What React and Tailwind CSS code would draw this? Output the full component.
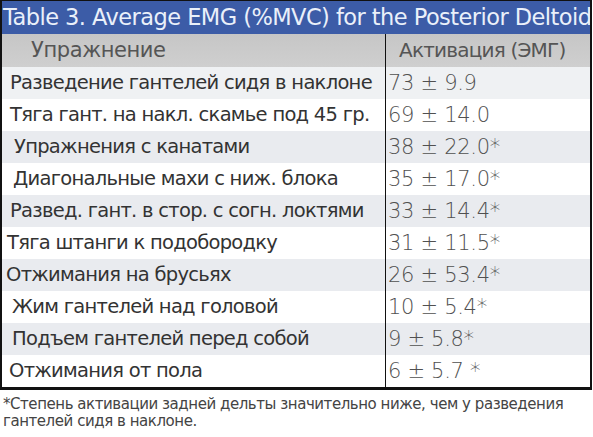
const rows = [
  ["Разведение гантелей сидя в наклоне", "73 ± 9.9", "pl-[8px]", "bg-[#eff1f3]"],
  ["Тяга гант. на накл. скамье под 45 гр.", "69 ± 14.0", "pl-[8px]", "bg-white"],
  ["Упражнения с канатами", "38 ± 22.0*", "pl-[12px]", "bg-[#e9ebef]"],
  ["Диагональные махи с ниж. блока", "35 ± 17.0*", "pl-[11px]", "bg-white"],
  ["Развед. гант. в стор. с согн. локтями", "33 ± 14.4*", "pl-[8px]", "bg-[#e9ebef]"],
  ["Тяга штанги к подобородку", "31 ± 11.5*", "pl-[5px]", "bg-white"],
  ["Отжимания на брусьях", "26 ± 53.4*", "pl-[4px]", "bg-[#e9ebef]"],
  ["Жим гантелей над головой", "10 ± 5.4*", "pl-[10px]", "bg-white"],
  ["Подъем гантелей перед собой", "9 ± 5.8*", "pl-[10px]", "bg-[#e9ebef]"],
  ["Отжимания от пола", "6 ± 5.7 *", "pl-[7px]", "bg-white"],
];

export default function App() {
  return (
    <div className="w-[593px] h-[437px] bg-white overflow-hidden" style={{ fontFamily: '"DejaVu Sans", Verdana, sans-serif' }}>
      <div className="w-[592px] border-t border-l-2 border-r-2 border-b-[3px] border-[#111]">
        <div className="h-[33px] bg-[#3c5ca7] text-[#eaf0fa] text-[22.5px] tracking-[-0.55px] leading-[33px] pl-[1px] whitespace-nowrap overflow-hidden">
          Table 3. Average EMG (%MVC) for the Posterior Deltoid
        </div>
        <div className="grid grid-cols-[384px_1fr] h-[33px] bg-[#cacaca] text-[#555] leading-[33px]">
          <div className="pl-[29px] border-r border-[#111] text-[21px] tracking-[-0.4px] bg-gradient-to-b from-[#c6c6c6] to-[#cfcfcf]">Упражнение</div>
          <div className="pl-[13px] text-[20px] tracking-[-0.8px] bg-gradient-to-b from-[#c6c6c6] to-[#cfcfcf]">Активация (ЭМГ)</div>
        </div>
        {rows.map(([name, val, pad, bg]) => (
          <div key={name} className={`grid grid-cols-[384px_1fr] h-[32px] ${bg} leading-[32px]`}>
            <div className={`${pad} border-r border-[#111] text-[#333] text-[19.5px] tracking-[-0.72px] whitespace-nowrap overflow-hidden`}>{name}</div>
            <div className="pl-[2px] text-[#505050] text-[21px] tracking-[-0.3px] whitespace-nowrap" style={{ fontWeight: 300 }}>{val}</div>
          </div>
        ))}
      </div>
      <div className="pl-[3px] pt-[6px] text-[#444] text-[15px] leading-[17px] tracking-[-0.45px]">
        *Степень активации задней дельты значительно ниже, чем у разведения
        <br />
        гантелей сидя в наклоне.
      </div>
    </div>
  );
}
